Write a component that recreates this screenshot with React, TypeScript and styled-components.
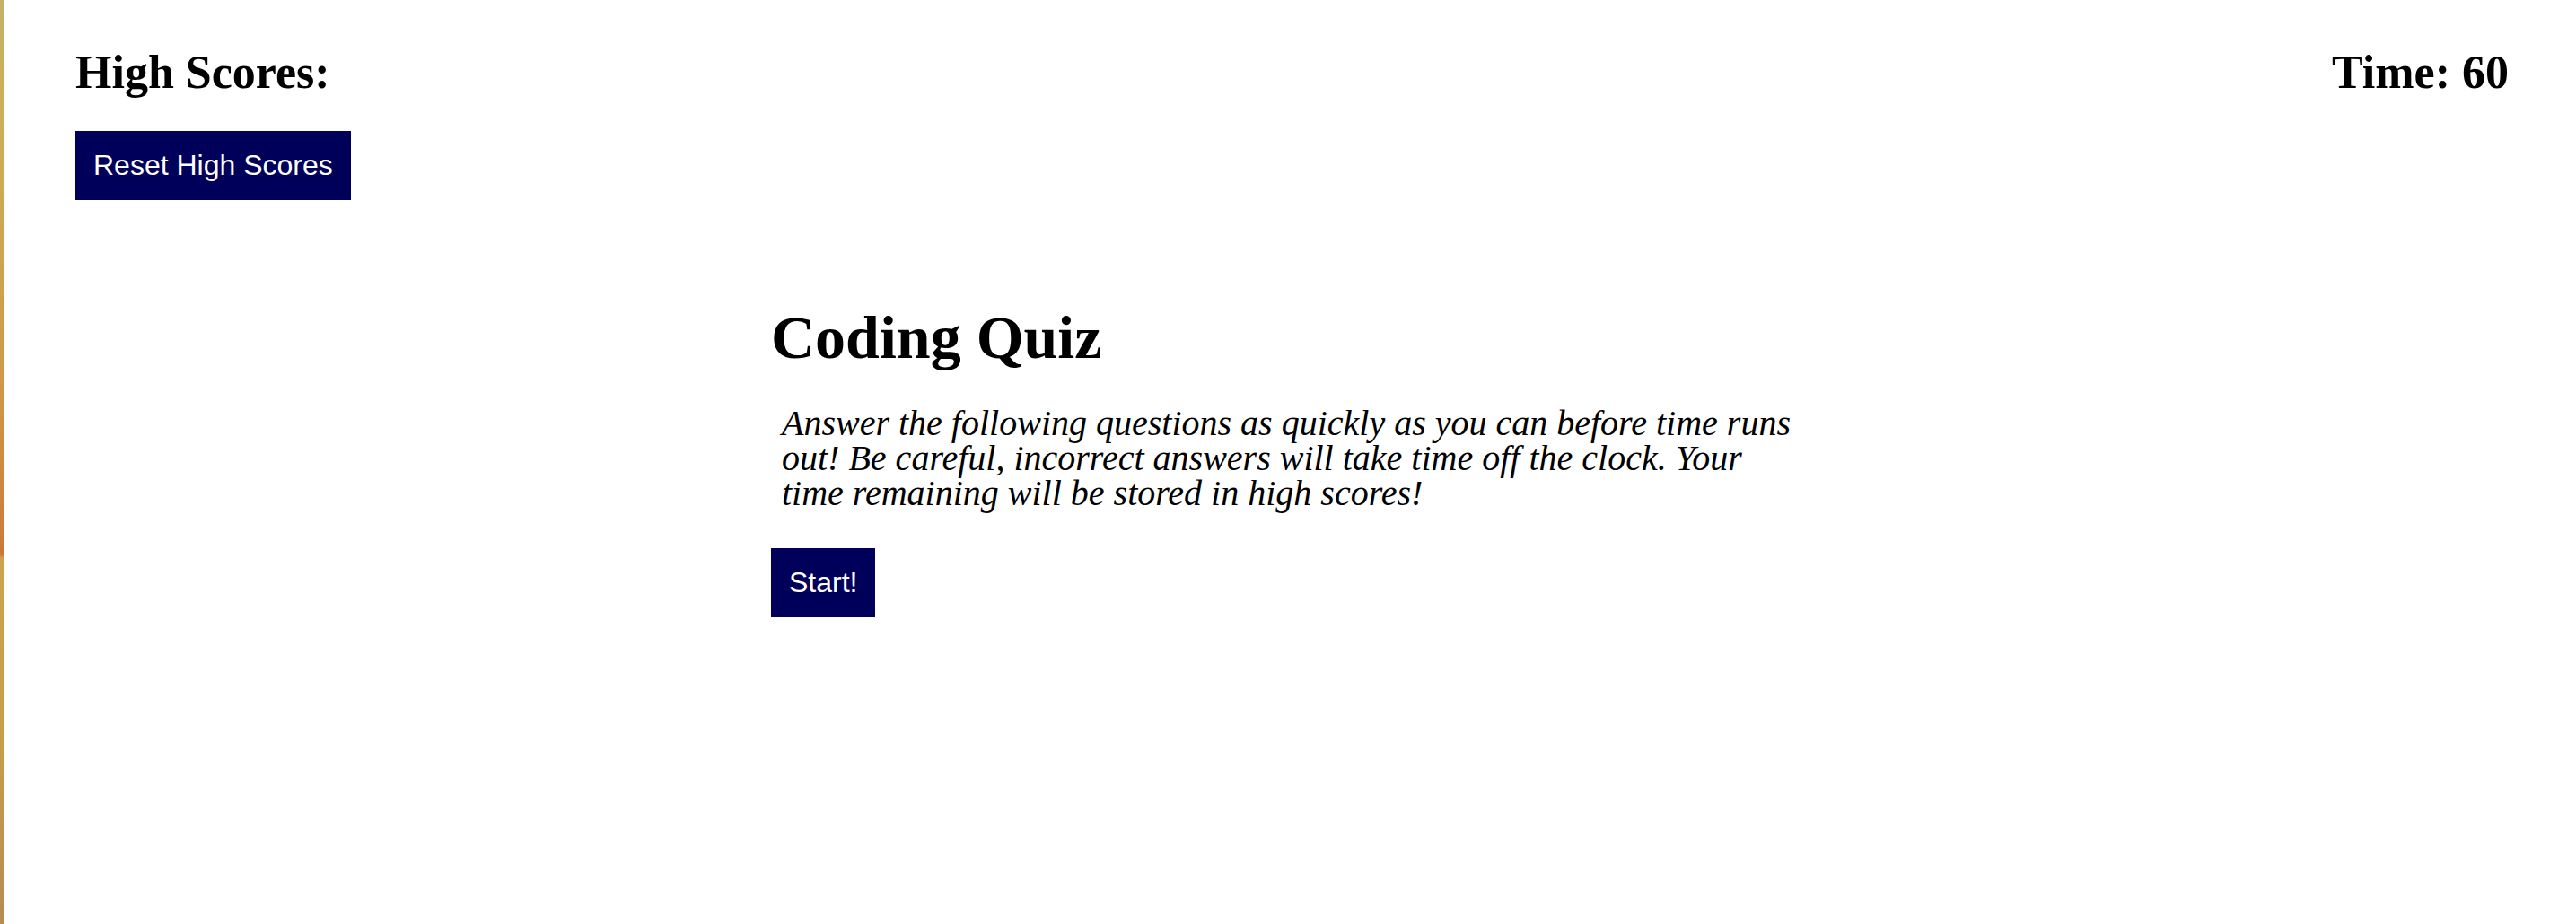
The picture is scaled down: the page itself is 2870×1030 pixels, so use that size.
import React from "react";
import styled, { createGlobalStyle } from "styled-components";

const GlobalStyle = createGlobalStyle`
  html, body {
    margin: 0;
    padding: 0;
  }
  body {
    min-height: 100vh;
    font-family: "Liberation Serif", "Times New Roman", serif;
    color: #000;
    background-color: #ffffff;
    background-image: linear-gradient(
      to bottom,
      #c4b266 0px,
      #cdb056 120px,
      #cf9a48 420px,
      #cd7d3a 600px,
      #c9773a 618px,
      #cfa24c 622px,
      #c99e48 820px,
      #b98a52 1030px
    );
    background-size: 4px 100%;
    background-repeat: no-repeat;
    background-position: left top;
  }
`;

const Page = styled.div`
  min-height: 1030px;
  padding-top: 51px;
  box-sizing: border-box;
`;

const Header = styled.header`
  display: flex;
  justify-content: space-between;
  align-items: flex-start;
  padding: 0 75px 0 84px;
`;

const ScoresPanel = styled.div`
  display: flex;
  flex-direction: column;
  align-items: flex-start;
  gap: 35px;
`;

const SideTitle = styled.h2`
  margin: 0;
  font-family: "Liberation Serif", "Times New Roman", serif;
  font-weight: 700;
  font-size: 52px;
  line-height: 60px;
`;

const ActionButton = styled.button`
  display: inline-block;
  margin: 0;
  padding: 20px;
  border: 0;
  border-radius: 0;
  background: #00005a;
  color: #ffffff;
  font-family: "Liberation Sans", Arial, sans-serif;
  font-size: 32px;
  line-height: 37px;
  cursor: pointer;
`;

const Quiz = styled.main`
  width: 1152px;
  margin: 114px auto 0;
  display: flex;
  flex-direction: column;
  align-items: flex-start;
`;

const QuizTitle = styled.h1`
  margin: 0;
  font-family: "Liberation Serif", "Times New Roman", serif;
  font-weight: 700;
  font-size: 68px;
  line-height: 78px;
`;

const Intro = styled.p`
  margin: 37px 0 42px;
  padding: 0 12px;
  box-sizing: border-box;
  width: 100%;
  font-family: "Liberation Serif", "Times New Roman", serif;
  font-style: italic;
  font-size: 40px;
  line-height: 39px;
`;

export default function App() {
  return (
    <>
      <GlobalStyle />
      <Page>
        <Header>
          <ScoresPanel>
            <SideTitle>High Scores:</SideTitle>
            <ActionButton>Reset High Scores</ActionButton>
          </ScoresPanel>
          <SideTitle>Time: 60</SideTitle>
        </Header>
        <Quiz>
          <QuizTitle>Coding Quiz</QuizTitle>
          <Intro>
            Answer the following questions as quickly as you can before time runs
            out! Be careful, incorrect answers will take time off the clock. Your
            time remaining will be stored in high scores!
          </Intro>
          <ActionButton>Start!</ActionButton>
        </Quiz>
      </Page>
    </>
  );
}
